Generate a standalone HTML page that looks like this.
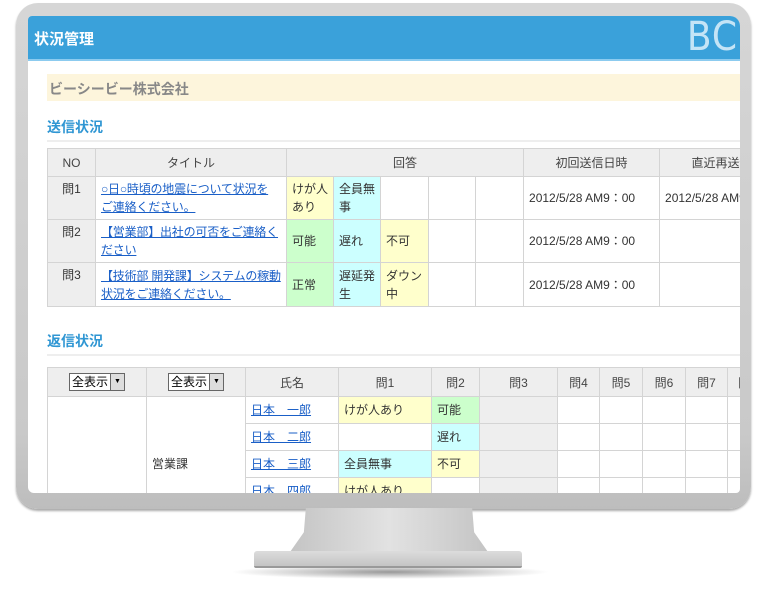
<!DOCTYPE html><html><head><meta charset="utf-8"><style>
*{margin:0;padding:0;box-sizing:border-box}
body{width:762px;height:595px;background:#fff;position:relative;overflow:hidden;font-family:"Liberation Sans","Noto Sans CJK JP",sans-serif;font-size:12px;color:#333}
.bezel{position:absolute;left:16px;top:3px;width:735px;height:506px;border-radius:22px;background:linear-gradient(#d6d6d6,#c9c9c9 85%,#bdbdbd);box-shadow:0 2px 2px #aaa}
.screen{position:absolute;left:28px;top:16px;width:712px;height:477px;background:#fff;overflow:hidden;border-radius:4px 10px 4px 6px}
.hdr{position:absolute;left:0;top:0;width:712px;height:45px;background:#3aa1da;border-bottom:2px solid #8ccbef}
.hdr b{position:absolute;left:6px;top:12px;color:#fff;font-size:15px}
.hdr i{position:absolute;right:2px;top:-2px;color:#c4e4f6;font-style:normal;font-size:40px;font-family:"DejaVu Sans Condensed","Liberation Sans Narrow",sans-serif;letter-spacing:1px}
.co{position:absolute;left:19px;top:58px;width:700px;height:27px;background:#fdf5dc;color:#888;font-weight:bold;font-size:14px;padding:5px 2px}
.sec{position:absolute;left:19px;color:#2f96d3;font-weight:bold;font-size:14px;width:700px;border-bottom:2px solid #eee;padding-bottom:3px}
table{position:absolute;border-collapse:collapse;table-layout:fixed}
td{border:1px solid #d4d4d4;padding:3px 5px;vertical-align:middle;line-height:18px}
td.t{padding:3px 3px 3px 5px;letter-spacing:-0.2px;white-space:nowrap}
th{border:1px solid #d4d4d4;background:#eee;font-weight:normal;text-align:center;color:#444}
a{color:#1a5fc7;text-decoration:underline}
.y{background:#ffffcc}.c{background:#ccffff}.g{background:#ccffcc}.n{background:#eee}
.sel{display:inline-block;border:1px solid #666;background:#fff;font-size:12px;line-height:16px;padding:0 0 0 2px;color:#000}
.sel span{display:inline-block;width:14px;height:16px;background:#ddd;border-left:1px solid #666;vertical-align:top;text-align:center;font-size:7px;margin-left:2px}
</style></head><body>
<div class="bezel"></div>
<div style="position:absolute;left:290px;top:508px;width:198px;height:44px;background:linear-gradient(90deg,#c4c4c4,#e2e2e2 50%,#c4c4c4);clip-path:polygon(8% 0,92% 0,93% 55%,100% 100%,0 100%,7% 55%)"></div>
<div style="position:absolute;left:230px;top:565px;width:320px;height:14px;border-radius:50%;background:radial-gradient(#999,rgba(255,255,255,0) 70%)"></div>
<div style="position:absolute;left:254px;top:551px;width:268px;height:17px;background:linear-gradient(#dcdcdc,#c4c4c4);border-radius:3px 3px 2px 2px;border-bottom:2px solid #999"></div>
<div class="screen">
<div class="hdr"><b>状況管理</b><i>BC</i></div>
<div class="co">ビーシービー株式会社</div>
<div class="sec" style="top:101px">送信状況</div>
<table style="left:19px;top:132px;width:760px">
<colgroup><col width="48"><col width="191"><col width="47"><col width="47"><col width="48"><col width="47"><col width="48"><col width="136"><col width="148"></colgroup>
<tr style="height:28px"><th>NO</th><th>タイトル</th><th colspan="5">回答</th><th>初回送信日時</th><th>直近再送信日時</th></tr>
<tr style="height:43px"><td class="n" style="vertical-align:top;text-align:center">問1</td><td class="t"><a>○日○時頃の地震について状況を<br>ご連絡ください。</a></td><td class="y">けが人あり</td><td class="c">全員無事</td><td></td><td></td><td></td><td>2012/5/28 AM9：00</td><td>2012/5/28 AM9：00</td></tr>
<tr style="height:43px"><td class="n" style="vertical-align:top;text-align:center">問2</td><td class="t"><a>【営業部】出社の可否をご連絡く<br>ださい</a></td><td class="g">可能</td><td class="c">遅れ</td><td class="y">不可</td><td></td><td></td><td>2012/5/28 AM9：00</td><td></td></tr>
<tr style="height:44px"><td class="n" style="vertical-align:top;text-align:center">問3</td><td class="t"><a>【技術部 開発課】システムの稼動<br>状況をご連絡ください。</a></td><td class="g">正常</td><td class="c">遅延発生</td><td class="y">ダウン中</td><td></td><td></td><td>2012/5/28 AM9：00</td><td></td></tr>
</table>
<div class="sec" style="top:315px">返信状況</div>
<table style="left:19px;top:351px;width:720px">
<colgroup><col width="99"><col width="99"><col width="93"><col width="93"><col width="48"><col width="78"><col width="42"><col width="43"><col width="43"><col width="42"><col width="40"></colgroup>
<tr style="height:29px"><th><span class="sel">全表示<span>▼</span></span></th><th><span class="sel">全表示<span>▼</span></span></th><th>氏名</th><th>問1</th><th>問2</th><th>問3</th><th>問4</th><th>問5</th><th>問6</th><th>問7</th><th>問8</th></tr>
<tr style="height:27px"><td rowspan="5"></td><td rowspan="5">営業課</td><td><a>日本　一郎</a></td><td class="y">けが人あり</td><td class="g">可能</td><td class="n"></td><td></td><td></td><td></td><td></td><td></td></tr>
<tr style="height:27px"><td><a>日本　二郎</a></td><td></td><td class="c">遅れ</td><td class="n"></td><td></td><td></td><td></td><td></td><td></td></tr>
<tr style="height:27px"><td><a>日本　三郎</a></td><td class="c">全員無事</td><td class="y">不可</td><td class="n"></td><td></td><td></td><td></td><td></td><td></td></tr>
<tr style="height:27px"><td><a>日本　四郎</a></td><td class="y">けが人あり</td><td></td><td class="n"></td><td></td><td></td><td></td><td></td><td></td></tr>
<tr style="height:27px"><td><a>日本　五郎</a></td><td></td><td></td><td class="n"></td><td></td><td></td><td></td><td></td><td></td></tr>
</table>
</div>
</body></html>
